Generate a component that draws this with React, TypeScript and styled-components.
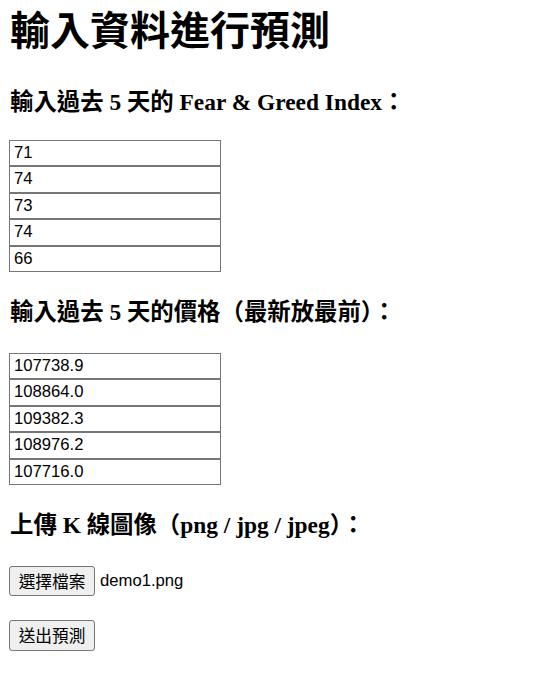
import React from 'react';
import styled, { createGlobalStyle } from 'styled-components';

const GlobalStyle = createGlobalStyle`
  body {
    margin: 0;
    background: #fff;
    color: #000;
  }
`;

const Page = styled.form`
  display: flex;
  flex-direction: column;
  align-items: flex-start;
  padding: 8px 9px 0;
  font-family: "Liberation Serif", "Noto Sans CJK TC", serif;
`;

const Title = styled.h1`
  margin: 0 0 0 1px;
  font-size: 40px;
  line-height: 48px;
  font-weight: 700;
`;

const SectionHeading = styled.h3<{ $top: number }>`
  margin: ${(p) => p.$top}px 0 0 1px;
  font-size: 23.4px;
  line-height: 27px;
  font-weight: 700;
`;

const InputStack = styled.div<{ $top: number }>`
  display: flex;
  flex-direction: column;
  margin-top: ${(p) => p.$top}px;
`;

const NumberInput = styled.input`
  box-sizing: border-box;
  width: 212px;
  height: 26.5px;
  margin: 0;
  padding: 1px 4px;
  border: 1px solid #767676;
  border-radius: 0;
  font-family: "Liberation Sans", "Noto Sans CJK TC", sans-serif;
  font-size: 16.67px;
  color: #000;
  background: #fff;
`;

const FileRow = styled.div`
  display: flex;
  align-items: center;
  gap: 5px;
  margin-top: 26.5px;
`;

const Button = styled.button`
  box-sizing: border-box;
  height: 30px;
  width: 86px;
  padding: 1px 7px;
  border: 1px solid #767676;
  border-radius: 3px;
  background: #efefef;
  font-family: "Liberation Sans", "Noto Sans CJK TC", sans-serif;
  font-size: 16.67px;
  color: #000;
`;

const SubmitButton = styled(Button)`
  margin-top: 24px;
  height: 31px;
`;

const FileName = styled.span`
  font-family: "Liberation Sans", "Noto Sans CJK TC", sans-serif;
  font-size: 16.67px;
`;

const fearGreed = ['71', '74', '73', '74', '66'];
const prices = ['107738.9', '108864.0', '109382.3', '108976.2', '107716.0'];

const App = () => {
  return (
    <>
      <GlobalStyle />
      <Page onSubmit={(e) => e.preventDefault()}>
        <Title>輸入資料進行預測</Title>
        <SectionHeading $top={33}>輸入過去 5 天的 Fear &amp; Greed Index：</SectionHeading>
        <InputStack $top={23.5}>
          {fearGreed.map((v, i) => (
            <NumberInput key={i} defaultValue={v} />
          ))}
        </InputStack>
        <SectionHeading $top={27}>輸入過去 5 天的價格（最新放最前）：</SectionHeading>
        <InputStack $top={26.5}>
          {prices.map((v, i) => (
            <NumberInput key={i} defaultValue={v} />
          ))}
        </InputStack>
        <SectionHeading $top={27}>上傳 K 線圖像（png / jpg / jpeg）：</SectionHeading>
        <FileRow>
          <Button type="button">選擇檔案</Button>
          <FileName>demo1.png</FileName>
        </FileRow>
        <SubmitButton type="submit">送出預測</SubmitButton>
      </Page>
    </>
  );
};

export default App;
